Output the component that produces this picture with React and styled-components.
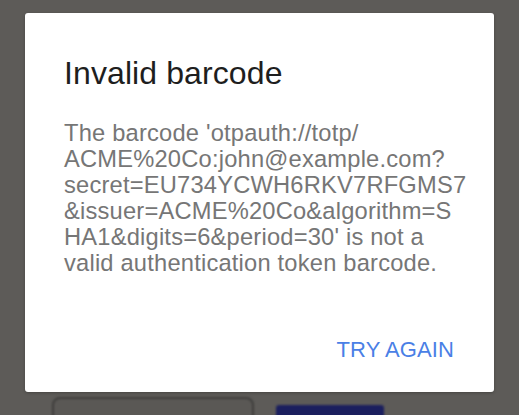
import React from "react";
import styled, { createGlobalStyle } from "styled-components";

const Global = createGlobalStyle`
  html, body { margin: 0; padding: 0; }
  body {
    width: 519px;
    height: 415px;
    overflow: hidden;
    background: #5d5b58;
    font-family: "Liberation Sans", Arial, Helvetica, sans-serif;
  }
`;

const Page = styled.div`
  position: relative;
  width: 519px;
  height: 415px;
  display: flex;
  flex-direction: column;
  justify-content: flex-end;
  background: #5d5b58;
  overflow: hidden;
`;

const BackRow = styled.div`
  display: flex;
  align-items: flex-start;
  gap: 22px;
  padding: 0 0 0 52px;
  height: 19px;
  filter: blur(1.2px);
`;

const BackInput = styled.div`
  width: 198px;
  height: 40px;
  margin-top: 1px;
  border: 2px solid #3f3e3c;
  border-radius: 8px;
  background: #5a5855;
`;

const BackButton = styled.div`
  width: 108px;
  height: 40px;
  margin-top: 9px;
  border-radius: 3px;
  background: #1b1f5e;
`;

const Overlay = styled.div`
  position: absolute;
  inset: 0;
  display: flex;
  justify-content: center;
  padding-top: 13px;
`;

const Dialog = styled.div`
  box-sizing: border-box;
  width: 469px;
  height: 379px;
  background: #ffffff;
  border-radius: 3px;
  padding: 42px 40px 0 39px;
  display: flex;
  flex-direction: column;
  box-shadow: 0 1px 3px rgba(0, 0, 0, 0.25);
`;

const Title = styled.h2`
  margin: 0;
  font-size: 32px;
  line-height: 36px;
  font-weight: 400;
  color: #1e1e1e;
  letter-spacing: 0.1px;
`;

const Message = styled.p`
  margin: 29px 0 0 0;
  font-size: 23.7px;
  line-height: 26px;
  font-weight: 400;
  color: #767676;
  letter-spacing: 0.2px;
`;

const Actions = styled.div`
  display: flex;
  justify-content: flex-end;
  margin-top: auto;
  padding: 0 0 27px 0;
`;

const ActionButton = styled.button`
  border: none;
  background: transparent;
  padding: 0;
  font-family: inherit;
  font-size: 22px;
  line-height: 30px;
  font-weight: 400;
  color: #4a7fe6;
  letter-spacing: 0.1px;
  cursor: pointer;
`;

const lines = [
  "The barcode 'otpauth://totp/",
  "ACME%20Co:john@example.com?",
  "secret=EU734YCWH6RKV7RFGMS7",
  "&issuer=ACME%20Co&algorithm=S",
  "HA1&digits=6&period=30' is not a",
  "valid authentication token barcode.",
];

export default function App() {
  return (
    <>
      <Global />
      <Page>
        <BackRow>
          <BackInput />
          <BackButton />
        </BackRow>
        <Overlay>
          <Dialog role="dialog">
            <Title>Invalid barcode</Title>
            <Message>
              {lines.map((l, i) => (
                <React.Fragment key={i}>
                  {l}
                  {i < lines.length - 1 && <br />}
                </React.Fragment>
              ))}
            </Message>
            <Actions>
              <ActionButton>TRY AGAIN</ActionButton>
            </Actions>
          </Dialog>
        </Overlay>
      </Page>
    </>
  );
}
